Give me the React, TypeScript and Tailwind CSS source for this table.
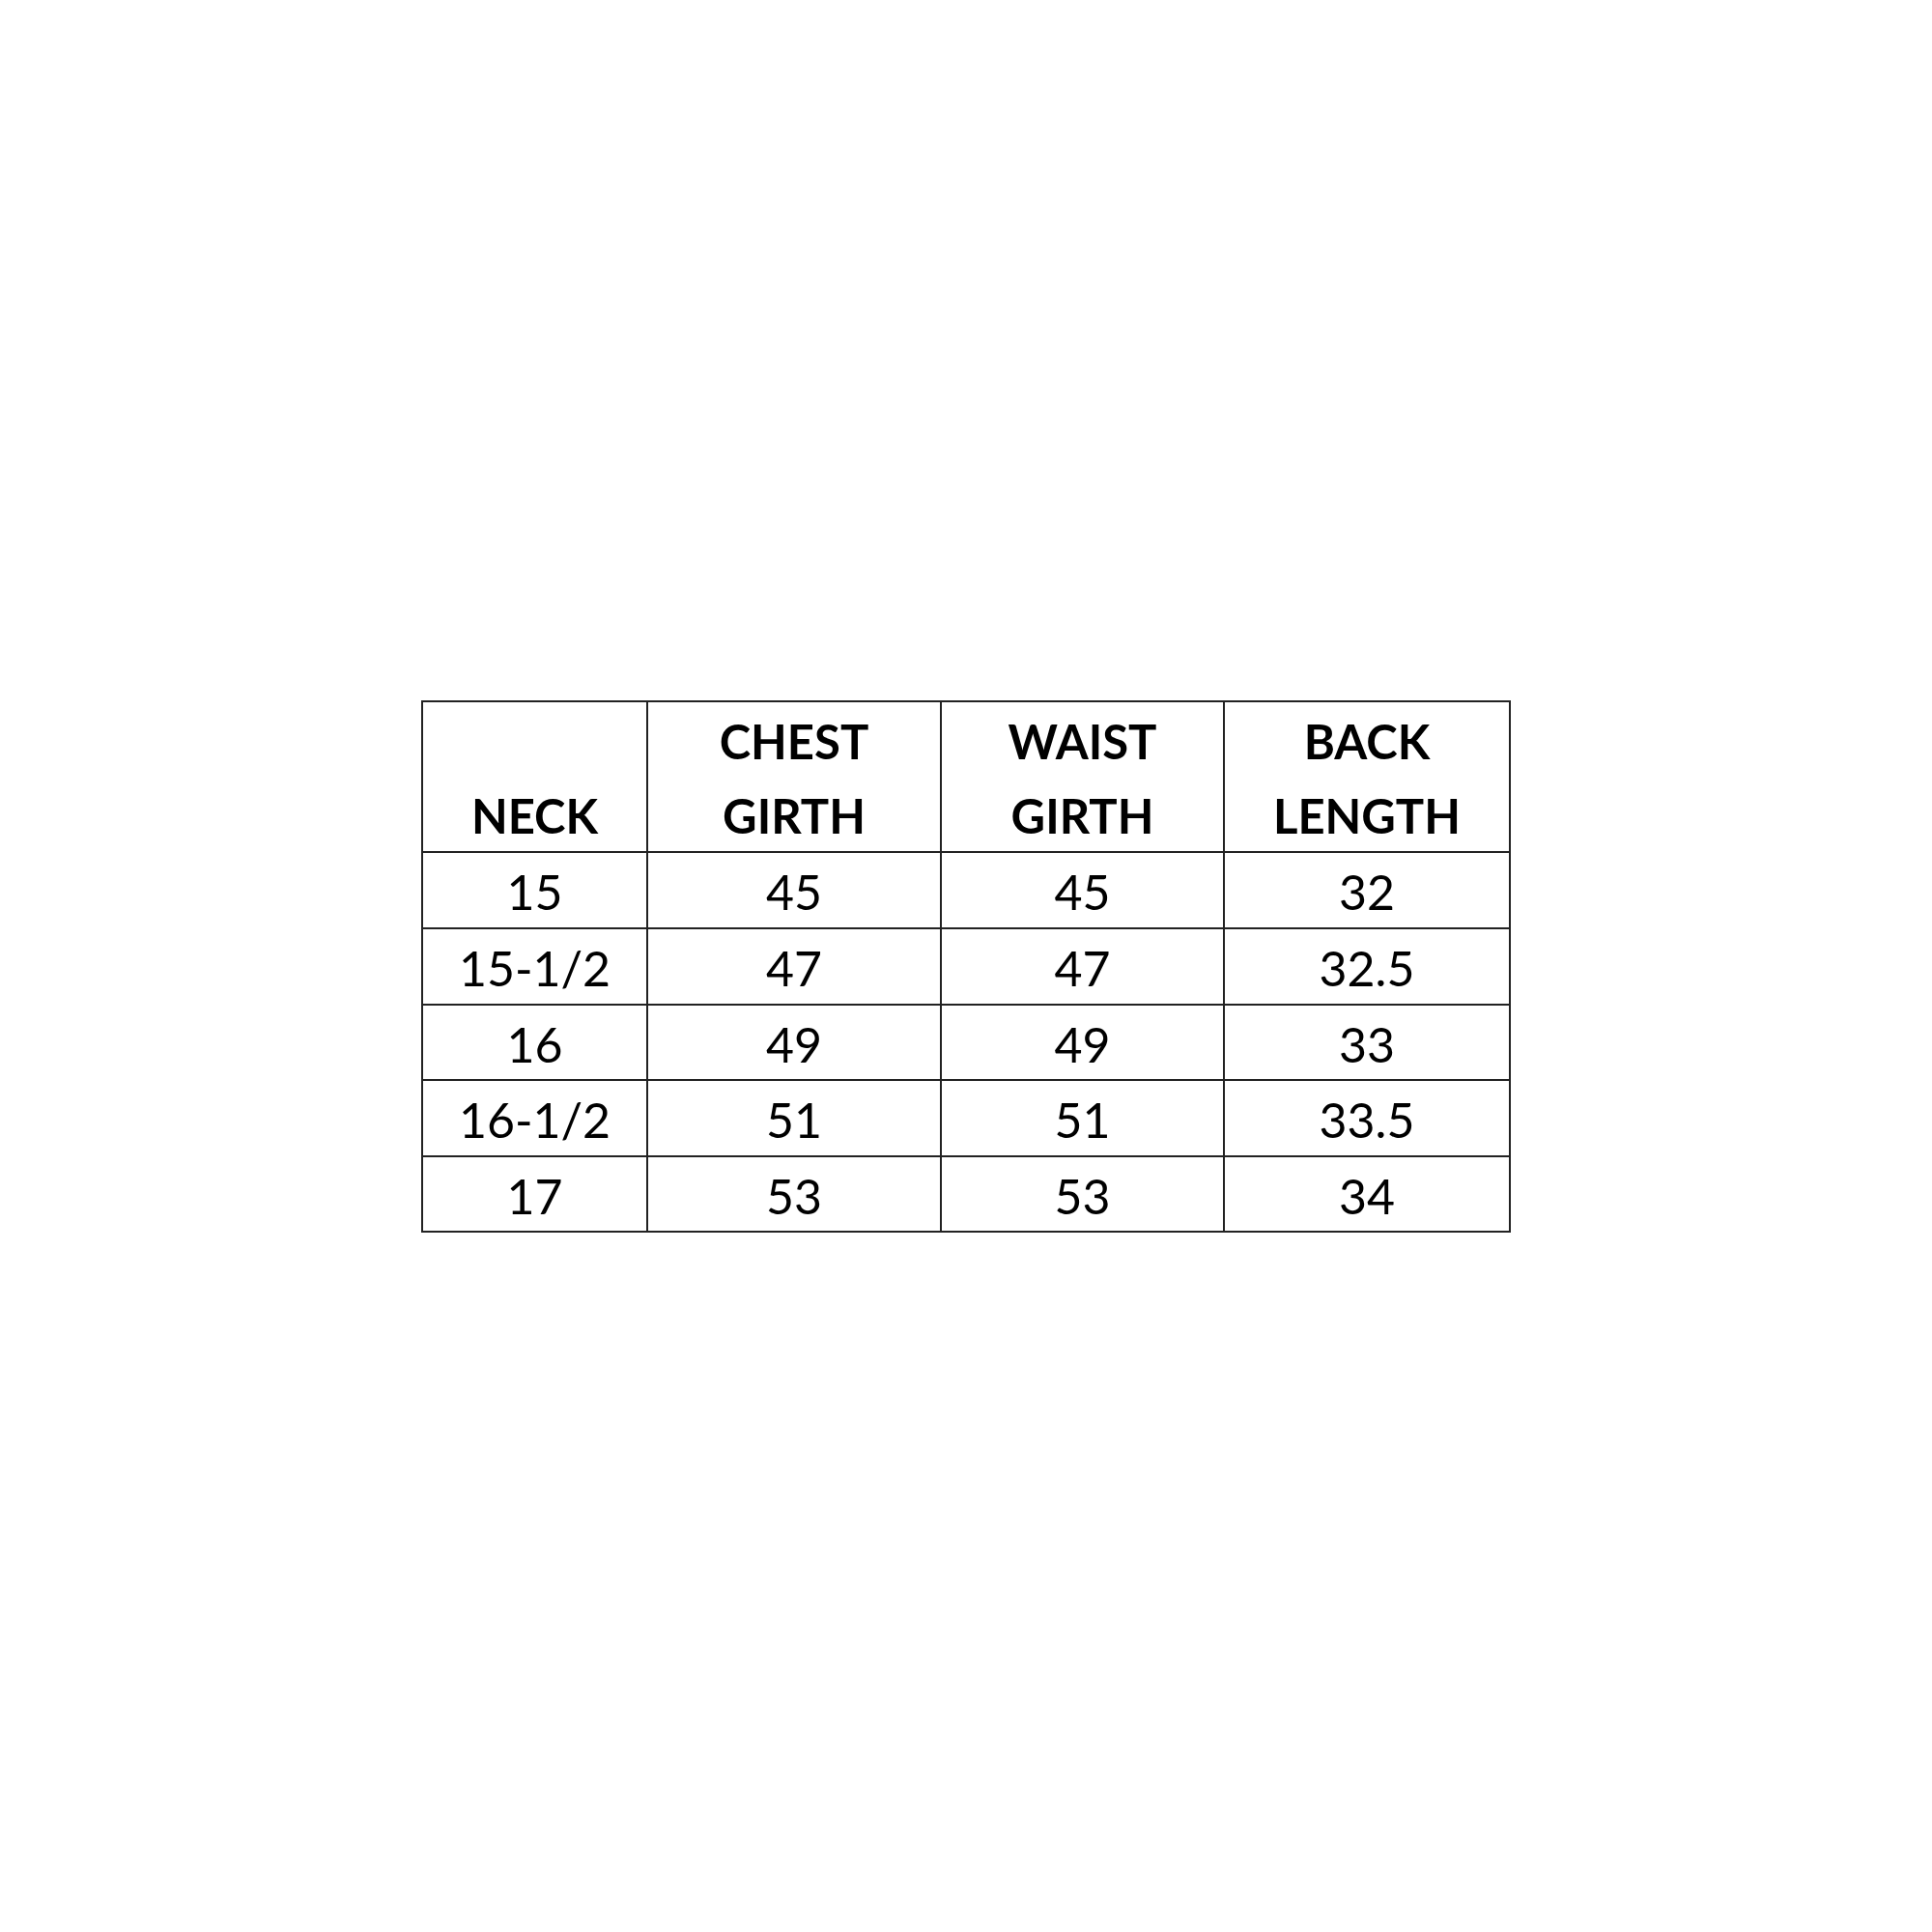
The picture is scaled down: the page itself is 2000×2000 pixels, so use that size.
const header = [
  { lines: ["", "NECK"] },
  { lines: ["CHEST", "GIRTH"] },
  { lines: ["WAIST", "GIRTH"] },
  { lines: ["BACK", "LENGTH"] },
];

const rows = [
  { h: "h-[79px]", cells: ["15", "45", "45", "32"] },
  { h: "h-[79px]", cells: ["15-1/2", "47", "47", "32.5"] },
  { h: "h-[78px]", cells: ["16", "49", "49", "33"] },
  { h: "h-[79px]", cells: ["16-1/2", "51", "51", "33.5"] },
  { h: "h-[78px]", cells: ["17", "53", "53", "34"] },
];

export default function App() {
  return (
    <div className="w-[2000px] h-[2000px] bg-white pt-[725px] pl-[436px] font-['Lato',sans-serif] text-black">
      <table className="table-fixed border-collapse w-[1126px]">
        <colgroup>
          <col className="w-[233px]" />
          <col className="w-[304px]" />
          <col className="w-[293px]" />
          <col className="w-[296px]" />
        </colgroup>
        <thead>
          <tr className="h-[156px]">
            {header.map((c, i) => (
              <th
                key={i}
                className="border-2 border-[#222] p-0 align-bottom text-center font-bold text-[49px]"
              >
                {c.lines[0] && <div className="leading-[81px]">{c.lines[0]}</div>}
                <div className="leading-[73px]">{c.lines[1]}</div>
              </th>
            ))}
          </tr>
        </thead>
        <tbody>
          {rows.map((r, i) => (
            <tr key={i} className={r.h}>
              {r.cells.map((v, j) => (
                <td
                  key={j}
                  className="border-2 border-[#222] p-0 pt-[3px] align-middle text-center text-[50px] leading-none"
                >
                  {v}
                </td>
              ))}
            </tr>
          ))}
        </tbody>
      </table>
    </div>
  );
}
